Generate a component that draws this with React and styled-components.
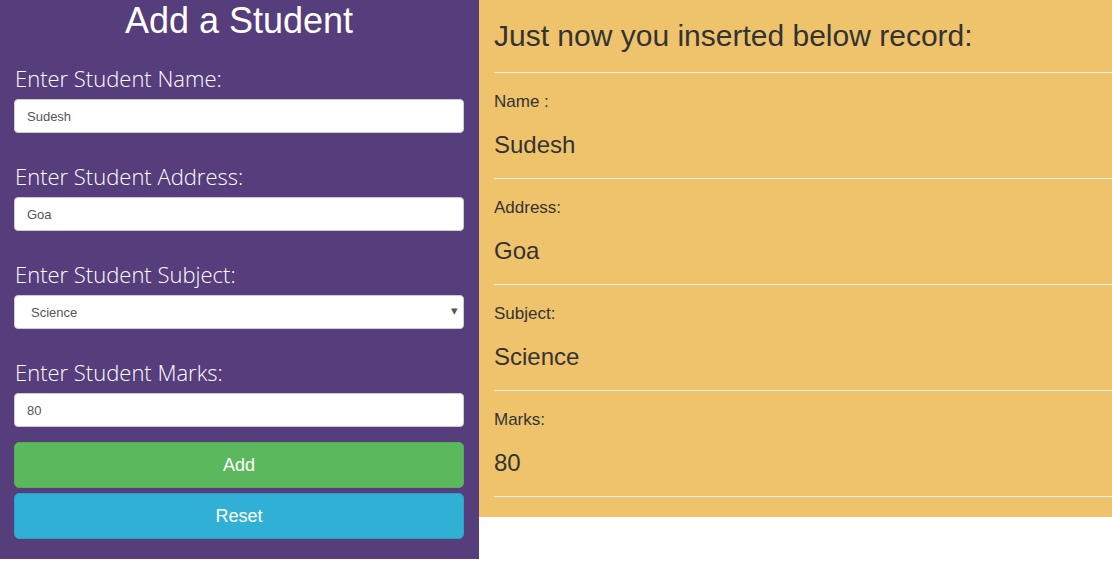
import React from 'react';
import styled, { createGlobalStyle } from 'styled-components';

const GlobalStyle = createGlobalStyle`
  html, body {
    margin: 0;
    padding: 0;
    background: #fff;
  }
  body {
    font-family: "Liberation Sans", Arial, sans-serif;
    color: #333;
  }
  * {
    box-sizing: border-box;
  }
`;

const fields = [
  { label: 'Enter Student Name:', value: 'Sudesh' },
  { label: 'Enter Student Address:', value: 'Goa' },
  { label: 'Enter Student Subject:', value: 'Science', select: true },
  { label: 'Enter Student Marks:', value: '80' }
];

const record = [
  { label: 'Name :', value: 'Sudesh' },
  { label: 'Address:', value: 'Goa' },
  { label: 'Subject:', value: 'Science' },
  { label: 'Marks:', value: '80' }
];

const App = () => {
  return (
    <>
      <GlobalStyle />
      <Page>
        <FormPanel>
          <Title>Add a Student</Title>
          <FieldList>
            {fields.map(f => (
              <Group key={f.label}>
                <FieldLabel>{f.label}</FieldLabel>
                {f.select ? (
                  <SelectWrap>
                    <Select defaultValue={f.value}>
                      <option>Science</option>
                      <option>Maths</option>
                      <option>English</option>
                    </Select>
                  </SelectWrap>
                ) : (
                  <Input type="text" defaultValue={f.value} />
                )}
              </Group>
            ))}
          </FieldList>
          <Actions>
            <Button $color="#5cb85c" $border="#52ad52">Add</Button>
            <Button $color="#31b0d5" $border="#2aa3c6">Reset</Button>
          </Actions>
        </FormPanel>

        <RecordPanel>
          <Heading>Just now you inserted below record:</Heading>
          <RecordList>
            {record.map(r => (
              <RecordRow key={r.label}>
                <RecordLabel>{r.label}</RecordLabel>
                <RecordValue>{r.value}</RecordValue>
              </RecordRow>
            ))}
          </RecordList>
        </RecordPanel>
      </Page>
    </>
  );
};

export default App;

const Page = styled.div`
  display: flex;
  align-items: flex-start;
  width: 1112px;
`;

const FormPanel = styled.div`
  width: 479px;
  flex-shrink: 0;
  background: #563d7c;
  padding: 0 15px 20px 14px;
`;

const Title = styled.h1`
  margin: 0 0 24px;
  font-family: "Liberation Sans", Arial, sans-serif;
  font-weight: 400;
  font-size: 36px;
  line-height: 40px;
  color: #fff;
  text-align: center;
  padding-top: 1px;
`;

const FieldList = styled.div`
  display: flex;
  flex-direction: column;
  gap: 30px;
  margin-bottom: 15px;
`;

const Group = styled.div`
  display: flex;
  flex-direction: column;
  gap: 8px;
`;

const FieldLabel = styled.label`
  display: block;
  margin-left: 1px;
  font-family: "Open Sans", sans-serif;
  font-weight: 300;
  font-size: 22px;
  line-height: 26px;
  color: #fff;
`;

const Input = styled.input`
  display: block;
  width: 100%;
  height: 34px;
  padding: 0 12px;
  border: 1px solid #ccc;
  border-radius: 4px;
  background: #fff;
  font-family: "Liberation Sans", Arial, sans-serif;
  font-size: 13px;
  color: #555;
  outline: none;
`;

const SelectWrap = styled.div`
  position: relative;
  &::after {
    content: '▾';
    position: absolute;
    right: 6px;
    top: 8px;
    font-size: 13px;
    color: #555;
    pointer-events: none;
  }
`;

const Select = styled.select`
  display: block;
  width: 100%;
  height: 34px;
  padding: 0 16px;
  border: 1px solid #ccc;
  border-radius: 4px;
  background: #fff;
  font-family: "Liberation Sans", Arial, sans-serif;
  font-size: 13px;
  color: #555;
  appearance: none;
  outline: none;
`;

const Actions = styled.div`
  display: flex;
  flex-direction: column;
  gap: 5px;
`;

const Button = styled.button`
  display: block;
  width: 100%;
  height: 46px;
  border: 1px solid ${p => p.$border};
  border-radius: 5px;
  background: ${p => p.$color};
  color: #fff;
  font-family: "Liberation Sans", Arial, sans-serif;
  font-size: 18px;
  cursor: pointer;
`;

const RecordPanel = styled.div`
  flex: 1;
  background: #efc36b;
  padding: 19px 0 20px 15px;
`;

const Heading = styled.h3`
  margin: 0 0 20px;
  font-family: "Liberation Sans", Arial, sans-serif;
  font-weight: 400;
  font-size: 30px;
  line-height: 33px;
  color: #333;
`;

const RecordList = styled.div`
  border-top: 1px solid #eee;
`;

const RecordRow = styled.div`
  padding: 18px 0 18px 0;
  border-bottom: 1px solid #eee;
`;

const RecordLabel = styled.div`
  font-size: 17px;
  line-height: 22px;
  margin-bottom: 17px;
`;

const RecordValue = styled.div`
  font-size: 24px;
  line-height: 30px;
`;
